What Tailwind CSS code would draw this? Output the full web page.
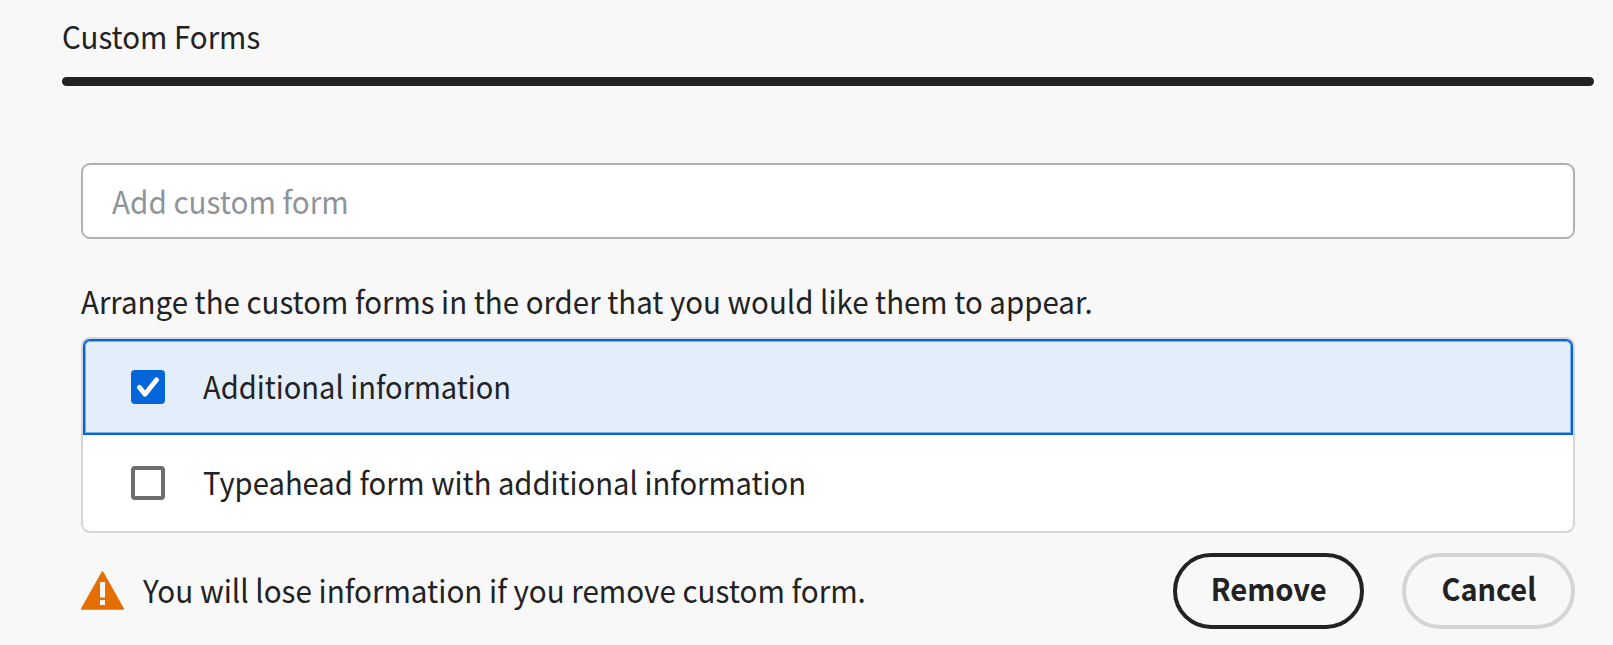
<!DOCTYPE html>
<html lang="en">
<head>
<meta charset="utf-8">
<title>Custom Forms</title>
<script src="https://cdn.jsdelivr.net/npm/@tailwindcss/browser@4"></script>
</head>
<body class="bg-[#f8f8f8] text-[#222222] font-['Noto_Sans_CJK_SC','Noto_Sans',sans-serif] text-[31.5px] leading-[48px] whitespace-nowrap overflow-hidden">
<main class="w-[1613px] h-[645px] pl-[62px] pr-[19px] pt-[11px] flex flex-col">
  <h1 class="h-[66px]"><span class="inline-block origin-left scale-x-[.936]">Custom Forms</span></h1>
  <div class="h-[9px] shrink-0 rounded-full bg-[#222222]"></div>
  <section class="px-[19px] pt-[77px] flex flex-col">
    <div class="h-[76px] rounded-[9px] border-2 border-[#b1b1b1] bg-white flex items-center pl-[29px] pb-[3px] text-[#909499]"><span class="inline-block origin-left scale-x-[.941]">Add custom form</span></div>
    <p class="mt-[37px] h-[61px]"><span class="inline-block origin-left scale-x-[.935]">Arrange the custom forms in the order that you would like them to appear.</span></p>
    <ul class="h-[196px] rounded-[9px] border-2 border-[#d5d5d5] bg-white">
      <li class="h-24 rounded-t-[7px] border-2 border-[#0265dc] bg-[#e4eefb] shadow-[inset_0_0_0_1px_#81b0ee] pl-[46px] flex items-center gap-[38px]">
        <svg class="size-[34px]" viewBox="0 0 34 34"><rect width="34" height="34" rx="4" fill="#0265dc"/><path d="M8.4 17.3 14 24.2 25.6 9.8" fill="none" stroke="#fff" stroke-width="4.9" stroke-linecap="round" stroke-linejoin="round"/></svg>
        <span class="inline-block origin-left scale-x-[.923] pb-1">Additional information</span>
      </li>
      <li class="h-24 pl-12 flex items-center gap-[38px]">
        <span class="size-[34px] rounded-[4px] border-4 border-[#6e6e6e] bg-white"></span>
        <span class="inline-block origin-left scale-x-[.927] pb-1">Typeahead form with additional information</span>
      </li>
    </ul>
    <div class="mt-5 h-[76px] flex items-center">
      <svg class="w-[43px] h-[39px] mb-0.5 shrink-0" viewBox="0 0 43 39"><path d="M20.7.7Q21.5-.2 22.3.7L42.8 37.2Q43.2 38.8 42 38.8H1Q-.2 38.8 .2 37.2ZM19 11V26.5H24V11ZM19 29V34H24V29Z" fill="#e46f00" fill-rule="evenodd"/></svg>
      <p class="ml-[19px] pb-1 grow"><span class="inline-block origin-left scale-x-[.94]">You will lose information if you remove custom form.</span></p>
      <button class="w-[191px] h-[76px] rounded-full border-4 border-[#222222] font-bold text-[31px] pb-1.5"><span class="inline-block scale-x-[.94]">Remove</span></button>
      <button class="ml-[38px] w-[173px] h-[76px] rounded-full border-4 border-[#d5d5d5] font-bold text-[31px] pb-1.5"><span class="inline-block scale-x-[.932]">Cancel</span></button>
    </div>
  </section>
</main>
</body>
</html>
